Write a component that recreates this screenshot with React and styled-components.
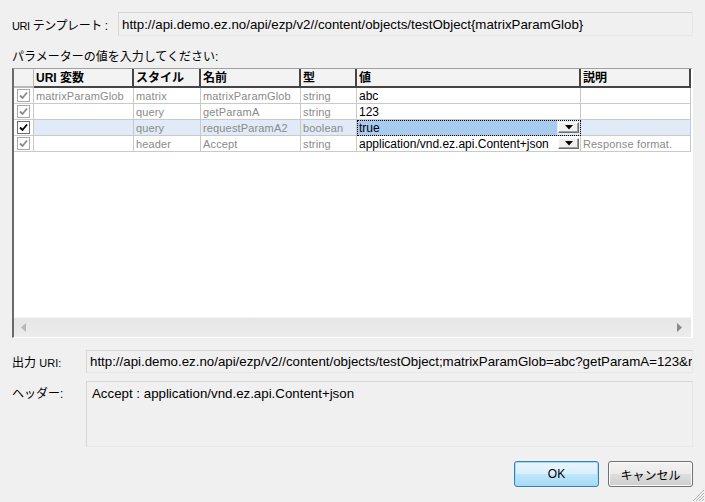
import React from 'react';
import styled, { createGlobalStyle, css } from 'styled-components';

const GlobalStyle = createGlobalStyle`
  html, body {
    margin: 0;
    padding: 0;
    background: #f0f0f0;
  }
  body {
    font-family: "Liberation Sans", "Noto Sans CJK JP", sans-serif;
    font-size: 12px;
    color: #000;
  }
  * {
    box-sizing: border-box;
  }
`;

const COLS = '20px 100px 67px 100px 56px 224px 110px';

const Dialog = styled.div`
  position: relative;
  display: flex;
  flex-direction: column;
  width: 705px;
  height: 502px;
  padding: 12px 12px 0 12px;
  background: #f0f0f0;
  overflow: hidden;
`;

const FieldRow = styled.div`
  display: grid;
  grid-template-columns: ${(p) => p.$label}px 1fr;
  align-items: ${(p) => (p.$top ? 'start' : 'center')};
  margin-top: ${(p) => p.$mt || 0}px;
`;

const Label = styled.span`
  white-space: nowrap;
  padding-top: ${(p) => p.$pt || 0}px;
  font-size: 12px;
  letter-spacing: ${(p) => p.$tight || 0}px;
`;

const SmallLatin = styled.span`
  font-size: 11px;
`;

const ReadonlyBox = styled.div`
  height: ${(p) => p.$h}px;
  padding: ${(p) => (p.$multi ? '4px 5px' : '0 3px')};
  display: flex;
  align-items: ${(p) => (p.$multi ? 'flex-start' : 'center')};
  border: 1px solid #d6d6d6;
  border-right-color: #e8e8e8;
  border-bottom-color: #e8e8e8;
  background: #f0f0f0;
  white-space: nowrap;
  overflow: hidden;
  font-size: 13.3px;
`;

const SectionLabel = styled.div`
  margin-top: 13px;
  height: 16px;
  line-height: 16px;
  font-size: 12px;
`;

const Grid = styled.div`
  margin-top: 3px;
  height: 270px;
  display: flex;
  flex-direction: column;
  border-top: 1px solid #a0a0a0;
  border-left: 2px solid #6a6a6a;
  border-right: 2px solid #fff;
  border-bottom: 1px solid #fff;
  background: #f0f0f0;
`;

const HeaderRow = styled.div`
  display: grid;
  grid-template-columns: ${COLS};
  height: 19px;
`;

const HeadCell = styled.div`
  border-right: 2px solid #454545;
  border-bottom: 2px solid #454545;
  background: #f3f3f3;
  padding: 1px 2px 0;
  font-weight: bold;
  font-size: 12px;
  line-height: 16px;
  white-space: nowrap;
  overflow: hidden;
  ${(p) =>
    p.$corner &&
    css`
      border-right: 1px solid #b8b8b8;
      border-bottom: 2px solid #b8b8b8;
    `}
`;

const BodyRow = styled.div`
  display: grid;
  grid-template-columns: ${COLS};
  height: 16px;
`;

const Cell = styled.div`
  position: relative;
  border-right: 1px solid #c9c9c9;
  border-bottom: 1px solid #c9c9c9;
  background: ${(p) => (p.$selected ? '#e0ebf7' : '#fff')};
  color: ${(p) => (p.$muted ? '#8a8a8a' : '#000')};
  padding: 1px 2px 0;
  font-size: ${(p) => (p.$muted ? 11 : 12)}px;
  letter-spacing: ${(p) => (p.$muted ? '0.15px' : '0')};
  line-height: 14px;
  white-space: nowrap;
  overflow: hidden;
`;

const CheckCell = styled(Cell)`
  display: flex;
  align-items: center;
  justify-content: center;
  padding: 0;
`;

const CheckBox = styled.span`
  width: 13px;
  height: 13px;
  border: 1px solid ${(p) => (p.$active ? '#707070' : '#a8a8a8')};
  background: #fff;
  display: flex;
  align-items: center;
  justify-content: center;
`;

const EditCell = styled(Cell)`
  display: flex;
  align-items: center;
  padding: 0;
  ${(p) =>
    p.$focused &&
    css`
      outline: 1px dotted #000;
      outline-offset: -1px;
    `}
`;

const EditText = styled.span`
  flex: 1;
  height: 100%;
  padding: 1px 2px 0;
  background: ${(p) => (p.$highlight ? '#a8cbf0' : 'transparent')};
  overflow: hidden;
`;

const DropButton = styled.span`
  width: 21px;
  height: 11px;
  margin: 0 1px;
  display: flex;
  align-items: center;
  justify-content: center;
  background: #f0f0f0;
  border-top: 1px solid #fff;
  border-left: 1px solid #fff;
  border-right: 1px solid #6f6f6f;
  border-bottom: 1px solid #6f6f6f;
  box-shadow: inset -1px -1px 0 #a0a0a0;
`;

const Filler = styled.div`
  flex: 1;
  display: grid;
  grid-template-columns: 677px 1fr;
`;

const WhiteArea = styled.div`
  background: #fff;
`;

const ScrollBar = styled.div`
  height: 20px;
  display: flex;
  align-items: center;
  justify-content: space-between;
  padding: 0 9px 0 7px;
  background: linear-gradient(#e6e6e6, #ececec);
  border-top: 1px solid #f6f6f6;
`;

const ButtonBar = styled.div`
  margin-top: 14px;
  display: flex;
  justify-content: flex-end;
  gap: 9px;
`;

const Button = styled.button`
  width: 85px;
  height: 26px;
  border-radius: 3px;
  font-family: "Liberation Sans", "Noto Sans CJK JP", sans-serif;
  font-size: 12px;
  color: #000;
  padding: 0;
  ${(p) =>
    p.$default
      ? css`
          border: 1px solid #3c7fb1;
          background: linear-gradient(#eaf6fd 0%, #d9f0fc 50%, #bee6fd 51%, #a7d9f5 100%);
          box-shadow: inset 0 0 0 1px #9fdcfb;
        `
      : css`
          border: 1px solid #707070;
          background: linear-gradient(#f2f2f2 0%, #ebebeb 50%, #dddddd 51%, #cfcfcf 100%);
          box-shadow: inset 0 0 0 1px #fcfcfc;
        `}
`;

const Grip = styled.svg`
  position: absolute;
  right: 0;
  bottom: 0;
`;

const Check = ({ active }) => (
  <CheckBox $active={active}>
    <svg width="9" height="9" viewBox="0 0 9 9">
      <path
        d="M1 4.5 L3.5 7 L8 1.5"
        fill="none"
        stroke={active ? '#000' : '#8a8a8a'}
        strokeWidth="1.8"
      />
    </svg>
  </CheckBox>
);

const Arrow = () => (
  <svg width="8" height="5" viewBox="0 0 8 5">
    <path d="M0 0 H8 L4 4.5 Z" fill="#000" />
  </svg>
);

const headers = ['', 'URI 変数', 'スタイル', '名前', '型', '値', '説明'];

const rows = [
  { uri: 'matrixParamGlob', style: 'matrix', name: 'matrixParamGlob', type: 'string', value: 'abc', desc: '' },
  { uri: '', style: 'query', name: 'getParamA', type: 'string', value: '123', desc: '' },
  { uri: '', style: 'query', name: 'requestParamA2', type: 'boolean', value: 'true', desc: '', selected: true, drop: true },
  { uri: '', style: 'header', name: 'Accept', type: 'string', value: 'application/vnd.ez.api.Content+json', desc: 'Response format.', drop: true },
];

export default function App() {
  return (
    <>
      <GlobalStyle />
      <Dialog>
        <FieldRow $label={106}>
          <Label $tight={-0.4}>
            <SmallLatin>URI</SmallLatin> テンプレート :
          </Label>
          <ReadonlyBox $h={24}>
            http://api.demo.ez.no/api/ezp/v2//content/objects/testObject{'{matrixParamGlob}'}
          </ReadonlyBox>
        </FieldRow>

        <SectionLabel>パラメーターの値を入力してください:</SectionLabel>

        <Grid>
          <HeaderRow>
            {headers.map((h, i) => (
              <HeadCell key={i} $corner={i === 0}>
                {h}
              </HeadCell>
            ))}
          </HeaderRow>
          {rows.map((r, i) => (
            <BodyRow key={i}>
              <CheckCell>
                <Check active={r.selected} />
              </CheckCell>
              <Cell $muted $selected={r.selected}>{r.uri}</Cell>
              <Cell $muted $selected={r.selected}>{r.style}</Cell>
              <Cell $muted $selected={r.selected}>{r.name}</Cell>
              <Cell $muted $selected={r.selected}>{r.type}</Cell>
              <EditCell $selected={r.selected} $focused={r.selected}>
                <EditText $highlight={r.selected}>{r.value}</EditText>
                {r.drop && (
                  <DropButton>
                    <Arrow />
                  </DropButton>
                )}
              </EditCell>
              <Cell $muted $selected={r.selected}>{r.desc}</Cell>
            </BodyRow>
          ))}
          <Filler>
            <WhiteArea />
          </Filler>
          <ScrollBar>
            <svg width="5" height="9" viewBox="0 0 5 9">
              <path d="M5 0 V9 L0 4.5 Z" fill="#b8b8b8" />
            </svg>
            <svg width="5" height="9" viewBox="0 0 5 9">
              <path d="M0 0 V9 L5 4.5 Z" fill="#8a8a8a" />
            </svg>
          </ScrollBar>
        </Grid>

        <FieldRow $label={74} $mt={12}>
          <Label>
            出力 <SmallLatin>URI:</SmallLatin>
          </Label>
          <ReadonlyBox $h={23}>
            http://api.demo.ez.no/api/ezp/v2//content/objects/testObject;matrixParamGlob=abc?getParamA=123&amp;requestParamA2=true
          </ReadonlyBox>
        </FieldRow>

        <FieldRow $label={74} $mt={8} $top>
          <Label $pt={3}>ヘッダー:</Label>
          <ReadonlyBox $h={66} $multi>
            Accept : application/vnd.ez.api.Content+json
          </ReadonlyBox>
        </FieldRow>

        <ButtonBar>
          <Button $default>OK</Button>
          <Button>キャンセル</Button>
        </ButtonBar>

        <Grip width="14" height="14" viewBox="0 0 14 14">
          <g stroke="#b4b4b4" strokeWidth="1">
            <line x1="13" y1="2" x2="2" y2="13" />
            <line x1="13" y1="5" x2="5" y2="13" />
            <line x1="13" y1="8" x2="8" y2="13" />
            <line x1="13" y1="11" x2="11" y2="13" />
          </g>
        </Grip>
      </Dialog>
    </>
  );
}
